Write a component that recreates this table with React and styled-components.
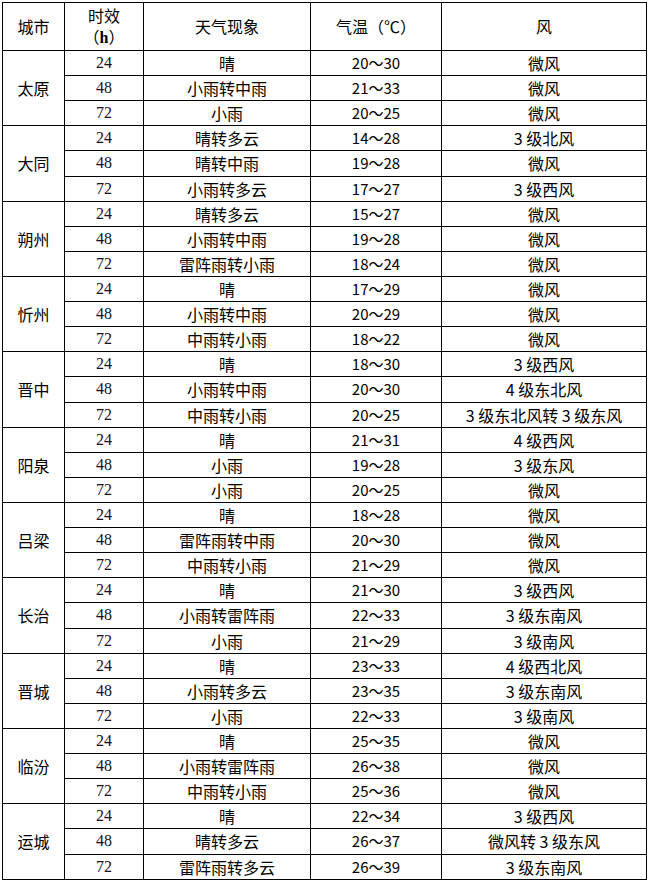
import React from "react";
import styled, { createGlobalStyle } from "styled-components";

const Global = createGlobalStyle`
  html, body { margin: 0; padding: 0; background: #fff; }
  body { padding: 2px 0 0 2px; }
`;

const Table = styled.table`
  border-collapse: collapse;
  table-layout: fixed;
  width: 644px;
  font-family: "Noto Sans CJK SC", "Liberation Sans", sans-serif;
  font-size: 16px;
  color: #000;
`;

const Col = styled.col`
  width: ${(p) => p.$w}px;
`;

const HeadRow = styled.tr`
  height: 48px;
`;

const Row = styled.tr`
  height: 25.12px;
`;

const Th = styled.th`
  border: 1px solid #000;
  font-weight: normal;
  text-align: center;
  vertical-align: middle;
  padding: 0;
  line-height: 21px;
`;

const Td = styled.td`
  border: 1px solid #000;
  text-align: center;
  vertical-align: middle;
  padding: 0;
  line-height: 20px;
  white-space: nowrap;
`;

const HourCell = styled(Td)`
  font-family: "Liberation Serif", "Noto Sans CJK SC", serif;
  font-size: 16px;
  color: #10102a;
`;

const TempCell = styled(Td)`
  font-family: "Noto Sans CJK SC", sans-serif;
  font-size: 15px;
`;

const HSpan = styled.span`
  font-family: "Liberation Serif", serif;
  font-weight: bold;
`;

const data = [
  ["太原", [["24","晴","20～30","微风"],["48","小雨转中雨","21～33","微风"],["72","小雨","20～25","微风"]]],
  ["大同", [["24","晴转多云","14～28","3 级北风"],["48","晴转中雨","19～28","微风"],["72","小雨转多云","17～27","3 级西风"]]],
  ["朔州", [["24","晴转多云","15～27","微风"],["48","小雨转中雨","19～28","微风"],["72","雷阵雨转小雨","18～24","微风"]]],
  ["忻州", [["24","晴","17～29","微风"],["48","小雨转中雨","20～29","微风"],["72","中雨转小雨","18～22","微风"]]],
  ["晋中", [["24","晴","18～30","3 级西风"],["48","小雨转中雨","20～30","4 级东北风"],["72","中雨转小雨","20～25","3 级东北风转 3 级东风"]]],
  ["阳泉", [["24","晴","21～31","4 级西风"],["48","小雨","19～28","3 级东风"],["72","小雨","20～25","微风"]]],
  ["吕梁", [["24","晴","18～28","微风"],["48","雷阵雨转中雨","20～30","微风"],["72","中雨转小雨","21～29","微风"]]],
  ["长治", [["24","晴","21～30","3 级西风"],["48","小雨转雷阵雨","22～33","3 级东南风"],["72","小雨","21～29","3 级南风"]]],
  ["晋城", [["24","晴","23～33","4 级西北风"],["48","小雨转多云","23～35","3 级东南风"],["72","小雨","22～33","3 级南风"]]],
  ["临汾", [["24","晴","25～35","微风"],["48","小雨转雷阵雨","26～38","微风"],["72","中雨转小雨","25～36","微风"]]],
  ["运城", [["24","晴","22～34","3 级西风"],["48","晴转多云","26～37","微风转 3 级东风"],["72","雷阵雨转多云","26～39","3 级东南风"]]],
];

export default function App() {
  return (
    <>
      <Global />
      <Table>
        <colgroup>
          <Col $w={62} />
          <Col $w={79} />
          <Col $w={167} />
          <Col $w={131} />
          <Col $w={205} />
        </colgroup>
        <thead>
          <HeadRow>
            <Th>城市</Th>
            <Th>时效<br />（<HSpan>h</HSpan>）</Th>
            <Th>天气现象</Th>
            <Th>气温（℃）</Th>
            <Th>风</Th>
          </HeadRow>
        </thead>
        <tbody>
          {data.map(([city, rows]) =>
            rows.map((r, i) => (
              <Row key={city + i}>
                {i === 0 && <Td rowSpan={3}>{city}</Td>}
                <HourCell>{r[0]}</HourCell>
                <Td>{r[1]}</Td>
                <TempCell>{r[2]}</TempCell>
                <Td>{r[3]}</Td>
              </Row>
            ))
          )}
        </tbody>
      </Table>
    </>
  );
}
